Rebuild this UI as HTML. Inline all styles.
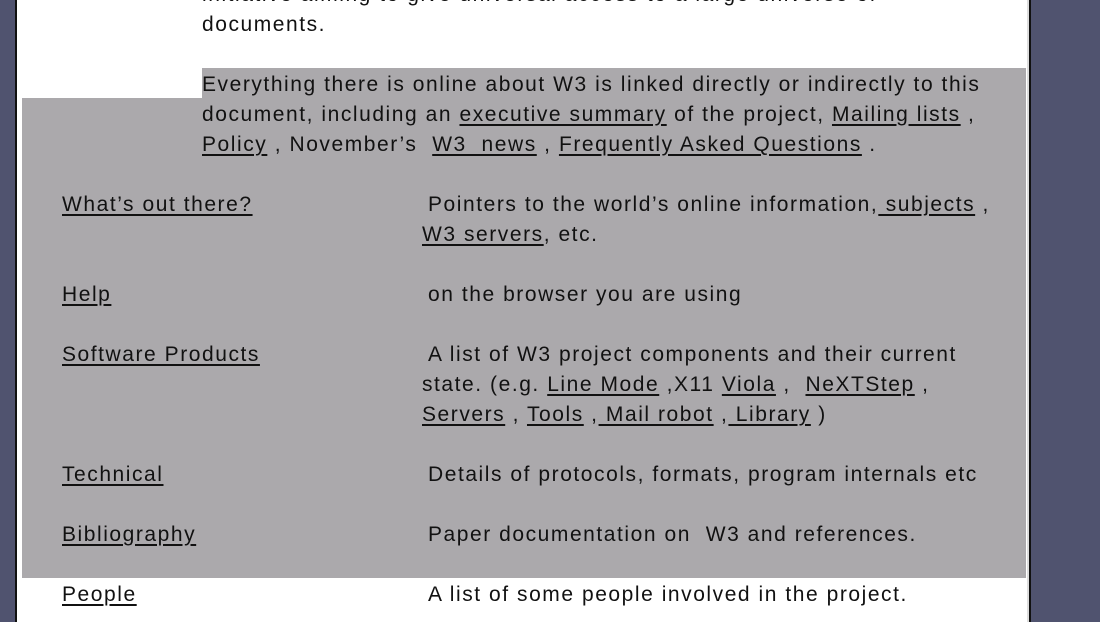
<!DOCTYPE html>
<html><head><meta charset="utf-8"><style>
html,body{margin:0;padding:0}
body{width:1100px;height:622px;position:relative;overflow:hidden;background:#fff;font-family:"Liberation Sans",Arial,sans-serif;font-size:21px;letter-spacing:1.55px;color:#111}
.l{position:absolute;white-space:nowrap;line-height:30px}
u{text-decoration:underline;text-underline-offset:3px}
</style></head><body>
<div style="position:absolute;left:0;top:0;width:15px;height:622px;background:#50536f"></div>
<div style="position:absolute;left:15px;top:0;width:2px;height:622px;background:#111"></div>
<div style="position:absolute;left:1029px;top:0;width:2px;height:622px;background:#111"></div>
<div style="position:absolute;left:1031px;top:0;width:69px;height:622px;background:#50536f"></div>
<div style="position:absolute;left:1027px;top:0;width:2px;height:622px;background:#ddd"></div>
<div style="position:absolute;left:202px;top:68px;width:824px;height:30px;background:#aba9ac"></div>
<div style="position:absolute;left:22px;top:98px;width:1004px;height:480px;background:#aba9ac"></div>

<div class="l" style="left:202px;top:-20px">initiative aiming to give universal access to a large universe of</div>
<div class="l" style="left:202px;top:10px">documents.</div>
<div class="l" style="left:202px;top:70px">Everything there is online about W3 is linked directly or indirectly to this</div>
<div class="l" style="left:202px;top:100px">document, including an <u>executive summary</u> of the project, <u>Mailing lists</u> ,</div>
<div class="l" style="left:202px;top:130px"><u>Policy</u> , November’s &nbsp;<u>W3&nbsp; news</u> , <u>Frequently Asked Questions</u> .</div>

<div class="l" style="left:62px;top:190px"><u>What’s out there?</u></div>
<div class="l" style="left:428px;top:190px">Pointers to the world’s online information,<u> subjects</u> ,</div>
<div class="l" style="left:422px;top:220px"><u>W3 servers</u>, etc.</div>

<div class="l" style="left:62px;top:280px"><u>Help</u></div>
<div class="l" style="left:428px;top:280px">on the browser you are using</div>

<div class="l" style="left:62px;top:340px"><u>Software Products</u></div>
<div class="l" style="left:428px;top:340px">A list of W3 project components and their current</div>
<div class="l" style="left:422px;top:370px">state. (e.g. <u>Line Mode</u> ,X11 <u>Viola</u> , &nbsp;<u>NeXTStep</u> ,</div>
<div class="l" style="left:422px;top:400px"><u>Servers</u> , <u>Tools</u> ,<u> Mail robot</u> ,<u> Library</u> )</div>

<div class="l" style="left:62px;top:460px"><u>Technical</u></div>
<div class="l" style="left:428px;top:460px">Details of protocols, formats, program internals etc</div>

<div class="l" style="left:62px;top:520px"><u>Bibliography</u></div>
<div class="l" style="left:428px;top:520px">Paper documentation on &nbsp;W3 and references.</div>

<div class="l" style="left:62px;top:580px"><u>People</u></div>
<div class="l" style="left:428px;top:580px">A list of some people involved in the project.</div>
</body></html>
